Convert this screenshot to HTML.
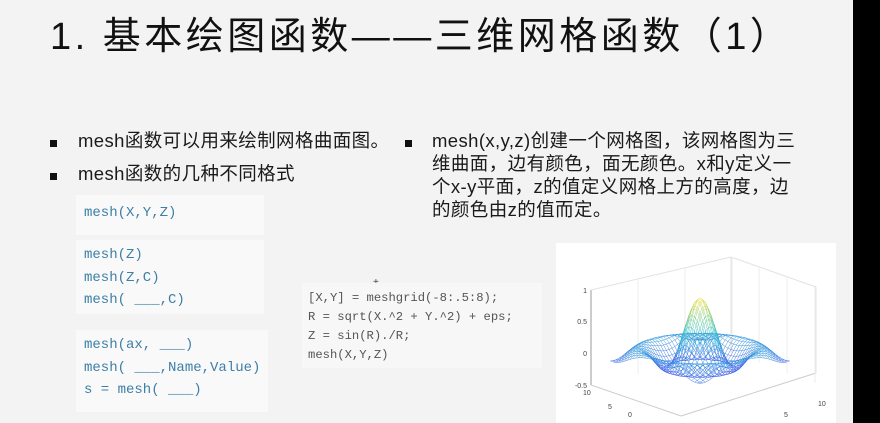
<!DOCTYPE html>
<html><head><meta charset="utf-8"><style>
body{margin:0;width:880px;height:423px;overflow:hidden;background:#f3f3f3;position:relative;font-family:"Liberation Sans","Noto Sans CJK SC",sans-serif}
.t{position:absolute;left:50px;top:5px;font-size:38px;color:#111;letter-spacing:3.5px;white-space:nowrap}
.b{position:absolute;font-size:18.5px;color:#1a1a1a;line-height:23px;letter-spacing:0.4px}
.sq{position:absolute;width:7px;height:7px;background:#111}
.code{position:absolute;background:#f9f9f9;font-family:"Liberation Mono",monospace;color:#3d7fa6;font-size:14px;line-height:22.5px;padding-left:8px;width:180px}
.c2{position:absolute;left:302px;top:283px;width:240px;height:85px;background:#f7f7f7;font-family:"Liberation Mono",monospace;color:#555;font-size:12.2px;line-height:19px;padding:6px 0 0 6px;box-sizing:border-box;white-space:pre}
.blk{position:absolute;left:853px;top:0;width:27px;height:423px;background:#000}
</style></head><body>
<div class="t">1. 基本绘图函数——三维网格函数（1）</div>
<div class="sq" style="left:50px;top:140px"></div>
<div class="b" style="left:78px;top:129px">mesh函数可以用来绘制网格曲面图。</div>
<div class="sq" style="left:50px;top:173px"></div>
<div class="b" style="left:78px;top:162px">mesh函数的几种不同格式</div>
<div class="sq" style="left:405px;top:140px"></div>
<div class="b" style="left:432px;top:129px;width:375px">mesh(x,y,z)创建一个网格图，该网格图为三维曲面，边有颜色，面无颜色。x和y定义一个x-y平面，z的值定义网格上方的高度，边的颜色由z的值而定。</div>
<div class="code" style="left:76px;top:195px;height:33px;padding-top:7px">mesh(X,Y,Z)</div>
<div class="code" style="left:76px;top:240px;height:70px;padding-top:4px">mesh(Z)<br>mesh(Z,C)<br>mesh( ___,C)</div>
<div class="code" style="left:76px;top:330px;height:78px;padding-top:4px;width:184px">mesh(ax, ___)<br>mesh( ___,Name,Value)<br>s = mesh( ___)</div>
<div style="position:absolute;left:373px;top:277px;font-size:10px;color:#444">+</div>
<div class="c2">[X,Y] = meshgrid(-8:.5:8);
R = sqrt(X.^2 + Y.^2) + eps;
Z = sin(R)./R;
mesh(X,Y,Z)</div>
<svg style="position:absolute;left:556px;top:243px" width="280" height="180" id="p">
<rect width="280" height="180" fill="#fff"/>
</svg>
<div class="blk"></div>
<script>
var s=document.getElementById('p'),h='';
function P(x,y,z){return [700-556+(x-y)*5.6, 356-243+(x+y)*1.4-z*58];}
function col(z){var t=(z+0.25)/1.25;t=Math.max(0,Math.min(1,t));
var r,g,b;if(t<0.5){var u=t/0.5;r=70*(1-u)+30*u;g=90*(1-u)+190*u;b=235*(1-u)+210*u;}else{var u=(t-0.5)/0.5;r=30*(1-u)+245*u;g=190*(1-u)+220*u;b=210*(1-u)+30*u;}
return 'rgb('+(r|0)+','+(g|0)+','+(b|0)+')';}
function Z(x,y){var r=Math.sqrt(x*x+y*y)+1e-9;return Math.sin(r)/r;}
h+='<line x1="35" y1="47" x2="35" y2="142" stroke="#999"/>';
h+='<line x1="35" y1="142" x2="125" y2="173" stroke="#ccc"/><line x1="125" y1="173" x2="260" y2="130" stroke="#ccc"/>';
h+='<line x1="35" y1="47" x2="175" y2="14" stroke="#e3e3e3"/><line x1="175" y1="14" x2="260" y2="44" stroke="#e3e3e3"/><line x1="175" y1="14" x2="175" y2="110" stroke="#e3e3e3"/><line x1="260" y1="44" x2="260" y2="130" stroke="#e3e3e3"/>';
for(var i=1;i<4;i++){h+='<line x1="'+(35+i*47)+'" y1="'+(47-i*11)+'" x2="'+(35+i*47)+'" y2="'+(142-i*11)+'" stroke="#eee"/>';h+='<line x1="'+(175+i*28)+'" y1="'+(14+i*10)+'" x2="'+(175+i*28)+'" y2="'+(110+i*10)+'" stroke="#eee"/>';}
[['1',47],['0.5',78],['0',110],['-0.5',142]].forEach(function(a){h+='<text x="31" y="'+(a[1]+3)+'" font-size="7" fill="#444" text-anchor="end" font-family="Liberation Sans">'+a[0]+'</text>';});
h+='<text x="27" y="152" font-size="7" fill="#444" font-family="Liberation Sans">10</text><text x="52" y="166" font-size="7" fill="#444" font-family="Liberation Sans">5</text><text x="72" y="174" font-size="7" fill="#444" font-family="Liberation Sans">0</text><text x="262" y="163" font-size="7" fill="#444" font-family="Liberation Sans">10</text><text x="228" y="174" font-size="7" fill="#444" font-family="Liberation Sans">5</text>';
for(var a=-8;a<=8.01;a+=0.5){for(var bb=-8;bb<8;bb+=0.5){
var p1=P(a,bb,Z(a,bb)),p2=P(a,bb+0.5,Z(a,bb+0.5)),c=col((Z(a,bb)+Z(a,bb+0.5))/2);
h+='<line x1="'+p1[0].toFixed(1)+'" y1="'+p1[1].toFixed(1)+'" x2="'+p2[0].toFixed(1)+'" y2="'+p2[1].toFixed(1)+'" stroke="'+c+'" stroke-width="0.45"/>';
p1=P(bb,a,Z(bb,a));p2=P(bb+0.5,a,Z(bb+0.5,a));c=col((Z(bb,a)+Z(bb+0.5,a))/2);
h+='<line x1="'+p1[0].toFixed(1)+'" y1="'+p1[1].toFixed(1)+'" x2="'+p2[0].toFixed(1)+'" y2="'+p2[1].toFixed(1)+'" stroke="'+c+'" stroke-width="0.45"/>';}}
s.innerHTML+=h;
</script>
</body></html>
